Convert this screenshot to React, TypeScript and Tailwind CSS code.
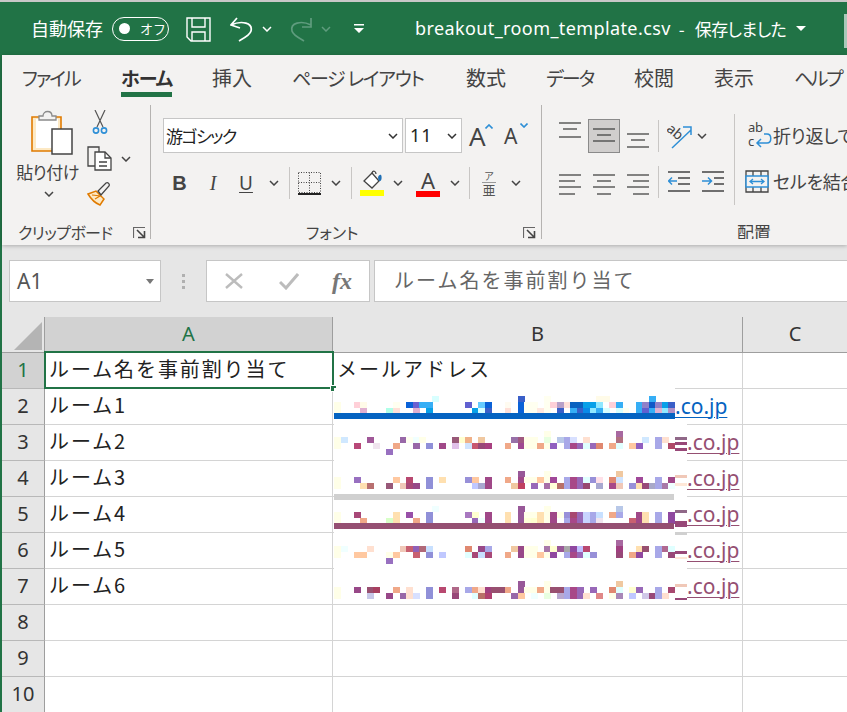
import React from "react";

const JP = "font-['Noto_Sans_CJK_JP','Noto_Sans',sans-serif]";

function Chev({ c = "#444", w = 10 }: { c?: string; w?: number }) {
  return (
    <svg width={w} height={6} viewBox="0 0 10 6" fill="none">
      <path d="M1 1l4 4 4-4" stroke={c} strokeWidth="1.5" />
    </svg>
  );
}

function Launcher() {
  return (
    <svg width="13" height="13" viewBox="0 0 13 13" fill="none">
      <path d="M.5 11V.5H12" stroke="#666" strokeWidth="1.2" />
      <path d="M4 3l7 7M5 10.5h6.5V4" stroke="#444" strokeWidth="1.6" />
    </svg>
  );
}

function Lines({ ys, insets = [] }: { ys: number[]; insets?: [number, number][] }) {
  return (
    <svg width="22" height="35" viewBox="0 0 22 35" fill="none">
      {ys.map((y, i) => {
        const [a, b] = insets[i] || [0, 22];
        return <path key={i} d={`M${a} ${y}H${b}`} stroke="#444" strokeWidth="1.3" />;
      })}
    </svg>
  );
}

function Sep({ h = "h-[32px]" }: { h?: string }) {
  return <div className={`w-px ${h} bg-[#c8c6c4] shrink-0`} />;
}

function TitleBar() {
  return (
    <div className="h-[53px] bg-[#217346] flex items-center text-white mt-[2px] pl-[31px] relative">
      <span className="text-[18px] w-[72px] whitespace-nowrap">自動保存</span>
      <div className="ml-[9px] w-[57px] h-[24px] rounded-full border border-white flex items-center pl-[6px] shrink-0">
        <div className="w-[11px] h-[11px] rounded-full bg-white" />
        <span className="ml-[10px] text-[13px] leading-none">オフ</span>
      </div>
      <svg className="ml-[17px] mt-[2px] shrink-0" width="25" height="25" viewBox="0 0 25 25" fill="none" stroke="#fff" strokeWidth="1.4">
        <path d="M1 1h23v23H5l-4-4z" />
        <path d="M6 1v9h13V1M6 24v-9h13v9" />
      </svg>
      <svg className="ml-[19px] mt-[2px] shrink-0" width="24" height="25" viewBox="0 0 24 25" fill="none" stroke="#fff" strokeWidth="1.7">
        <path d="M7 1L1 8l9 3M1 8C12 3 23 6 21 14c-1 4-7 7-12 10" />
      </svg>
      <div className="ml-[8px] w-[10px] flex"><Chev c="#fff" /></div>
      <svg className="ml-[17px] mt-[2px] shrink-0" width="24" height="25" viewBox="0 0 24 25" fill="none" stroke="#5f9c7e" strokeWidth="1.7">
        <path d="M22 1v9l-9 0M22 8C12 3 1 6 3 14c1 4 7 7 12 10" />
      </svg>
      <div className="ml-[8px] w-[10px] flex"><Chev c="#5f9c7e" /></div>
      <svg className="ml-[23px] shrink-0" width="10" height="9" viewBox="0 0 10 9" fill="#fff">
        <path d="M0 0h10v1.6H0zM0 4h10L5 9z" />
      </svg>
      <span className="ml-[51px] text-[18px] tracking-[0.4px] whitespace-nowrap font-['Noto_Sans','Noto_Sans_CJK_JP',sans-serif]">
        breakout_room_template.csv
      </span>
      <span className="ml-[8px] text-[17px] whitespace-nowrap">-</span>
      <span className="ml-[10px] text-[17px] whitespace-nowrap [font-feature-settings:'palt'] tracking-[-0.5px]">保存しました</span>
      <svg className="ml-[10px] shrink-0" width="10" height="5" viewBox="0 0 10 5" fill="#fff">
        <path d="M0 0h10L5 5z" />
      </svg>
      <div className="absolute right-0 top-[12px] w-[3px] h-[34px] bg-[#a9c9b9]" />
    </div>
  );
}

function Tabs() {
  return (
    <div className="h-[45px] flex gap-[41px] pl-[20px] text-[19px] text-[#444] [font-feature-settings:'palt'] leading-[46px] whitespace-nowrap">
      <span className="w-[58px] tracking-[-2px]">ファイル</span>
      <span className="w-[50px] font-bold text-[#333] relative tracking-[-1px]">
        ホーム
        <span className="absolute left-0 right-[-1px] top-[37px] h-[5px] bg-[#217346]" />
      </span>
      <span className="w-[39px] text-[20px]">挿入</span>
      <span className="w-[133px] tracking-[-1.3px]">ページ レイアウト</span>
      <span className="w-[39px] text-[20px]">数式</span>
      <span className="w-[47px] tracking-[-2px]">データ</span>
      <span className="w-[39px] text-[20px]">校閲</span>
      <span className="w-[39px] text-[20px]">表示</span>
      <span className="w-[47px] tracking-[-2.5px]">ヘルプ</span>
    </div>
  );
}

function ClipboardGroup() {
  return (
    <div className="w-[149px] shrink-0 h-[134px] border-r border-[#b5b3b1] flex flex-col relative">
      <div className="flex flex-1">
        <div className="w-[76px] ml-[15px] flex flex-col items-center shrink-0">
          <svg className="mt-[5px] ml-[-7px]" width="42" height="45" viewBox="0 0 42 45" fill="none">
            <path d="M1 7h29v34H1z" fill="#fde9c4" stroke="#e07b00" strokeWidth="1.6" />
            <path d="M5 9h22v29H5z" fill="#fff" />
            <path d="M8 10V6h4c0-6 9-6 9 0h4v4z" fill="#f3f2f1" stroke="#8a8a8a" strokeWidth="1.3" />
            <path d="M21 19h20v25H21z" fill="#fff" stroke="#444" strokeWidth="1.5" />
          </svg>
          <span className="text-[17px] leading-[20px] mt-[7px] text-[#444] [font-feature-settings:'palt'] whitespace-nowrap ml-[-15px] tracking-[-0.5px]">貼り付け</span>
          <div className="mt-[9px] ml-[-12px] flex"><Chev /></div>
        </div>
        <div className="flex flex-col mt-[5px] ml-[-6px]">
          <svg className="ml-[5px]" width="16" height="25" viewBox="0 0 16 25" fill="none">
            <path d="M3 0l8 17M13 0L5 17" stroke="#555" strokeWidth="1.2" />
            <circle cx="4" cy="20.5" r="2.6" stroke="#2e8fd6" strokeWidth="1.6" />
            <circle cx="12" cy="20.5" r="2.6" stroke="#2e8fd6" strokeWidth="1.6" />
          </svg>
          <div className="flex items-center mt-[11px]">
            <svg width="25" height="25" viewBox="0 0 25 25" fill="none" stroke="#444" strokeWidth="1.3">
              <path d="M8 20H1V1h11v5" />
              <path d="M8 6h10l6 6v12H8z" fill="#fff" />
              <path d="M18 6v6h6M12 16h8M12 20h8" />
            </svg>
            <div className="ml-[9px] flex"><Chev /></div>
          </div>
          <svg className="mt-[11px]" width="25" height="24" viewBox="0 0 25 24" fill="none">
            <path d="M1 12l8-3 8 8-4 6C8 21 4 17 1 12z" fill="#fde9c4" stroke="#e07b00" strokeWidth="1.5" />
            <path d="M5 13l9 1M8 17l5-3" stroke="#e07b00" strokeWidth="1.2" />
            <path d="M11 9l3 4 8-9c1-2-1-4-3-3z" fill="#f3f2f1" stroke="#444" strokeWidth="1.3" />
          </svg>
        </div>
      </div>
      <div className="h-[16px] flex items-center mb-[-1px] text-[16px] tracking-[-0.6px] text-[#444] [font-feature-settings:'palt'] pl-[16px] whitespace-nowrap">
        クリップボード
      </div>
      <div className="absolute right-[4px] bottom-[-1px] flex"><Launcher /></div>
    </div>
  );
}

function FontGroup() {
  return (
    <div className="w-[391px] shrink-0 h-[134px] border-r border-[#b5b3b1] flex flex-col relative pl-[12px] pt-[13px]">
      <div className="flex items-stretch h-[35px]">
        <div className="w-[240px] bg-white border border-[#c6c6c6] flex items-center pl-[2px] pr-[4px] justify-between text-[17px] tracking-[-1.5px] text-[#222] [font-feature-settings:'palt']">
          <span>游ゴシック</span>
          <Chev c="#333" />
        </div>
        <div className="ml-[2px] w-[57px] bg-white border border-[#c6c6c6] flex items-center pl-[4px] pr-[4px] justify-between text-[18px] text-[#222]">
          <span className="tracking-[1px] font-['Noto_Sans',sans-serif]">11</span>
          <Chev c="#333" />
        </div>
        <div className="ml-[7px] w-[24px] relative flex items-center font-['Noto_Sans',sans-serif] text-[26px] text-[#444] leading-none">
          A
          <svg className="absolute right-0 top-[6px]" width="8" height="5" viewBox="0 0 8 5" fill="none"><path d="M.5 4.5L4 1l3.5 3.5" stroke="#2e8fd6" strokeWidth="1.6" /></svg>
        </div>
        <div className="ml-[11px] w-[24px] relative flex items-center font-['Noto_Sans',sans-serif] text-[21px] text-[#444] leading-none pt-[2px]">
          A
          <svg className="absolute right-0 top-[5px]" width="8" height="5" viewBox="0 0 8 5" fill="none"><path d="M.5.5L4 4l3.5-3.5" stroke="#2e8fd6" strokeWidth="1.6" /></svg>
        </div>
      </div>
      <div className="flex items-center h-[32px] mt-[14px]">
        <span className="w-[33px] text-center text-[20px] font-bold text-[#444] font-['Liberation_Sans',sans-serif]">B</span>
        <span className="w-[34px] text-center text-[20px] italic text-[#444] font-['Liberation_Serif',serif]">I</span>
        <span className="w-[32px] text-center text-[19px] underline underline-offset-2 text-[#444] font-['Noto_Sans',sans-serif]">U</span>
        <div className="w-[23px] flex justify-center"><Chev /></div>
        <div className="ml-[4px]"><Sep /></div>
        <svg className="ml-[8px] shrink-0" width="23" height="23" viewBox="0 0 23 23" fill="none">
          <path d="M.5 .5h22v20H.5zM11.5 .5v20M.5 10.5h22" stroke="#444" strokeDasharray="1 1.5" />
          <path d="M0 22h23" stroke="#222" strokeWidth="2" />
        </svg>
        <div className="w-[30px] flex justify-center"><Chev /></div>
        <Sep />
        <svg className="ml-[8px] shrink-0" width="24" height="26" viewBox="0 0 24 26" fill="none">
          <path d="M4 11l8-8 7 8-7 7z" fill="#fff" stroke="#444" strokeWidth="1.3" />
          <path d="M12 3c1-3 4-2 4 1" stroke="#444" strokeWidth="1.3" />
          <path d="M19 11c3 1 3-5 2-6-2-1-3 2-3 3z" fill="#1f6fb5" />
          <path d="M0 20h24v6H0z" fill="#ffff00" />
        </svg>
        <div className="w-[28px] flex justify-center"><Chev /></div>
        <div className="ml-[4px] w-[24px] flex flex-col items-center">
          <span className="text-[22px] leading-[22px] text-[#444] font-['Noto_Sans',sans-serif]">A</span>
          <div className="w-[24px] h-[6px] bg-[#ff0000]" />
        </div>
        <div className="w-[29px] flex justify-center"><Chev /></div>
        <Sep />
        <div className="ml-[9px] w-[20px] flex flex-col items-center text-[#555] leading-none">
          <span className="text-[10px]">ア</span>
          <span className="text-[13px] border-t border-[#999] mt-[1px]">亜</span>
        </div>
        <div className="w-[34px] flex justify-center"><Chev /></div>
      </div>
      <div className="mt-auto h-[16px] mb-[-1px] flex items-center text-[16px] text-[#444] [font-feature-settings:'palt'] pl-[143px] whitespace-nowrap">
        フォント
      </div>
      <div className="absolute right-[5px] bottom-[-1px] flex"><Launcher /></div>
    </div>
  );
}

function AlignGroup() {
  return (
    <div className="flex-1 h-[134px] flex flex-col relative pl-[17px] overflow-hidden">
      <div className="flex mt-[9px] h-[91px]">
        <div className="flex flex-col shrink-0">
          <div className="flex items-center h-[35px] mt-[4px]">
            <Lines ys={[5, 11, 19]} insets={[[0, 22], [4, 18], [0, 22]]} />
            <div className="ml-[7px] w-[32px] h-[34px] bg-[#d0cecd] border border-[#8a8a8a] flex items-center justify-center">
              <Lines ys={[11, 17, 23]} insets={[[0, 22], [4, 18], [0, 22]]} />
            </div>
            <div className="ml-[7px]"><Lines ys={[16, 22, 29]} insets={[[0, 22], [4, 18], [0, 22]]} /></div>
            <div className="ml-[9px]"><Sep /></div>
            <svg className="ml-[8px] shrink-0" width="25" height="26" viewBox="0 0 25 26" fill="none">
              <path d="M5 25L24 7M16 4h8v8" stroke="#2e8fd6" strokeWidth="1.5" />
              <text x="0" y="12" fontSize="14" fill="#444" transform="rotate(40 6 8)" fontFamily="Noto Sans">ab</text>
            </svg>
            <div className="ml-[5px] flex"><Chev /></div>
          </div>
          <div className="flex items-center h-[35px] mt-[11px]">
            <Lines ys={[11, 17, 23, 30]} insets={[[0, 22], [0, 16], [0, 22], [0, 16]]} />
            <div className="ml-[12px]"><Lines ys={[11, 17, 23, 30]} insets={[[0, 22], [4, 18], [0, 22], [4, 18]]} /></div>
            <div className="ml-[12px]"><Lines ys={[11, 17, 23, 30]} insets={[[0, 22], [6, 22], [0, 22], [6, 22]]} /></div>
            <div className="ml-[9px]"><Sep /></div>
            <svg className="ml-[9px] shrink-0" width="22" height="21" viewBox="0 0 22 21" fill="none">
              <path d="M0 1h22M10 7h12M10 13h12M0 20h22" stroke="#444" strokeWidth="1.3" />
              <path d="M9 10H1M4 6.5L.5 10 4 13.5" stroke="#2e8fd6" strokeWidth="1.5" />
            </svg>
            <svg className="ml-[12px] shrink-0" width="22" height="21" viewBox="0 0 22 21" fill="none">
              <path d="M0 1h22M12 7h10M12 13h10M0 20h22" stroke="#444" strokeWidth="1.3" />
              <path d="M0 10h9M6 6.5L9.5 10 6 13.5" stroke="#2e8fd6" strokeWidth="1.5" />
            </svg>
          </div>
        </div>
        <div className="ml-[10px]"><Sep h="h-[91px]" /></div>
        <div className="flex flex-col ml-[11px] shrink-0 whitespace-nowrap text-[18px] tracking-[-0.3px] text-[#444] [font-feature-settings:'palt']">
          <div className="flex items-center h-[35px] mt-[4px] ml-[2px]">
            <svg width="24" height="28" viewBox="0 0 24 28" fill="none">
              <text x="0" y="10" fontSize="13" fill="#444" fontFamily="Noto Sans">ab</text>
              <text x="0" y="24" fontSize="13" fill="#444" fontFamily="Noto Sans">c</text>
              <path d="M16 12h3c5 0 5 9 0 9H10M13 17l-4 4 4 4" stroke="#2e8fd6" strokeWidth="1.5" />
            </svg>
            <span className="ml-[1px]">折り返して</span>
          </div>
          <div className="flex items-center h-[35px] mt-[11px] ml-[-1px]">
            <svg width="24" height="23" viewBox="0 0 24 23" fill="none">
              <path d="M1 1h22v21H1zM8 1v21M16 1v21" stroke="#444" strokeWidth="1.3" />
              <path d="M1 6h22v11H1z" fill="#f3f2f1" stroke="#2e8fd6" strokeWidth="1.5" />
              <path d="M5 11.5h14M8 9l-3 2.5L8 14M16 9l3 2.5L16 14" stroke="#2e8fd6" strokeWidth="1.3" />
            </svg>
            <span className="ml-[4px]">セルを結合</span>
          </div>
        </div>
      </div>
      <div className="mt-auto h-[16px] mb-[-1px] text-[17px] text-[#444] leading-[16px] pl-[178px]">配置</div>
    </div>
  );
}

function FormulaBar() {
  return (
    <div className="h-[72px] bg-[#e6e6e6] flex pt-[15px] pl-[7px] items-start">
      <div className="w-[152px] h-[42px] bg-white border border-[#c6c6c6] flex items-center justify-between pl-[7px] pr-[6px] text-[21px] text-[#555] font-['Noto_Sans',sans-serif]">
        <span className="pt-[2px]">A1</span>
        <svg width="8" height="5" viewBox="0 0 8 5" fill="#777"><path d="M0 0h8L4 5z" /></svg>
      </div>
      <div className="w-[45px] h-[42px] flex flex-col items-center justify-center gap-[3px] pt-[1px]">
        <div className="w-[3px] h-[3px] bg-[#b0b0b0]" />
        <div className="w-[3px] h-[3px] bg-[#b0b0b0]" />
        <div className="w-[3px] h-[3px] bg-[#b0b0b0]" />
      </div>
      <div className="w-[164px] h-[42px] bg-white border border-[#c6c6c6] flex items-center pl-[18px] shrink-0">
        <svg width="18" height="18" viewBox="0 0 18 18" fill="none" stroke="#bcbcbc" strokeWidth="2.4"><path d="M1 2l16 14M17 2L1 16" /></svg>
        <svg className="ml-[36px]" width="20" height="18" viewBox="0 0 20 18" fill="none" stroke="#bcbcbc" strokeWidth="3"><path d="M1 10l6 6L19 2" /></svg>
        <span className="ml-[33px] text-[24px] italic font-bold text-[#777] font-['Liberation_Serif',serif] leading-none">fx</span>
      </div>
      <div className="ml-[4px] flex-1 h-[42px] bg-white border-y border-l border-[#c6c6c6] flex items-center pl-[19px] pb-[3px] text-[20px] tracking-[2px] text-[#666] whitespace-nowrap overflow-hidden">
        ルーム名を事前割り当て
      </div>
    </div>
  );
}

type B = [number, number, string];
const CW = 341 / 52;

const r2: B[] = [[15,0,"#d8ffff"],[28,0,"#3a5fc8"],[48,0,"#36aef5"],[32,0,"#fffff0"],[40,0,"#fffbe8"],[41,0,"#fffbe8"],
[0,1,"#ffffe8"],[3,1,"#ffd0d8"],[4,1,"#fffbe8"],[9,1,"#fffff0"],[11,1,"#0a62d8"],[12,1,"#6a60d0"],[13,1,"#36aef5"],[14,1,"#36aef5"],[20,1,"#6060d0"],[22,1,"#66ccff"],[23,1,"#0a62d8"],[26,1,"#fffbf0"],[28,1,"#0a62d8"],[29,1,"#fffff0"],[30,1,"#fffff0"],[32,1,"#fffff0"],[33,1,"#ffd0d8"],[34,1,"#b8a0c8"],[35,1,"#ffe0d8"],[36,1,"#0a62c0"],[37,1,"#0a62c0"],[38,1,"#08a0e8"],[39,1,"#08a0e8"],[40,1,"#90e8ff"],[42,1,"#ffd0d8"],[43,1,"#36aef5"],[46,1,"#36aef5"],[47,1,"#9080c8"],[48,1,"#1058c8"],[49,1,"#9080c8"],[50,1,"#08a0e8"],[51,1,"#3a5fc8"],
[0,2,"#ffffe8"],[4,2,"#e0b0d0"],[8,2,"#b0ffe8"],[9,2,"#ffe0d8"],[12,2,"#e0b0d0"],[14,2,"#08a0e8"],[21,2,"#08a0e8"],[22,2,"#d8ffff"],[23,2,"#3a5fc8"],[26,2,"#ffe0d8"],[28,2,"#0a62d8"],[29,2,"#fffff0"],[30,2,"#fffff0"],[31,2,"#ffe8e0"],[32,2,"#fffff0"],[34,2,"#3a5fc8"],[36,2,"#36aef5"],[37,2,"#3a5fc8"],[38,2,"#0a8ae8"],[39,2,"#90e8ff"],[40,2,"#36aef5"],[41,2,"#d8ffff"],[43,2,"#d8ffff"],[44,2,"#fffff0"],[46,2,"#36aef5"],[47,2,"#6060d0"],[48,2,"#36aef5"],[49,2,"#e0b0d0"],[50,2,"#90e8ff"],[51,2,"#b090c8"]];

const r3: B[] = [[32,0,"#ffffe8"],[43,0,"#a868a0"],
[0,1,"#ffffe8"],[1,1,"#d0e8ff"],[5,1,"#a05898"],[10,1,"#9868a8"],[11,1,"#fffff0"],[12,1,"#f0ffff"],[13,1,"#ffffe8"],[18,1,"#985878"],[19,1,"#ffffd0"],[20,1,"#f0b088"],[22,1,"#f0c8a0"],[27,1,"#9870a8"],[28,1,"#a05880"],[29,1,"#ffffe8"],[30,1,"#ffffe8"],[32,1,"#e8ffe0"],[34,1,"#b8c8e8"],[35,1,"#a8a8e8"],[36,1,"#d8e0ff"],[38,1,"#ffe0d0"],[43,1,"#b07080"],[47,1,"#d0e8ff"],[49,1,"#a8a8e8"],[50,1,"#ffe0d0"],
[0,2,"#ffffe8"],[3,2,"#b84878"],[6,2,"#f0e4ee"],[9,2,"#f0a888"],[12,2,"#9868a8"],[14,2,"#9090d8"],[16,2,"#a04888"],[18,2,"#e0c0e8"],[20,2,"#d0e4ff"],[21,2,"#c85870"],[22,2,"#984878"],[23,2,"#a84080"],[26,2,"#f0a888"],[28,2,"#a04890"],[29,2,"#ffffe8"],[30,2,"#ffffe8"],[31,2,"#f0a888"],[32,2,"#ffffe8"],[33,2,"#9060c0"],[35,2,"#a8a8e8"],[36,2,"#a84888"],[37,2,"#9868b8"],[38,2,"#e0ffff"],[39,2,"#9868b8"],[40,2,"#e08870"],[42,2,"#f0a888"],[43,2,"#e0ffff"],[45,2,"#ffc8a0"],[46,2,"#9060c0"],[49,2,"#a8a8e8"],[51,2,"#b04868"],
[8,3,"#9870c0"]];

const r4: B[] = [[28,0,"#985898"],[32,0,"#ffffe8"],[43,0,"#f0c8a0"],
[0,1,"#ffffe8"],[3,1,"#9870c0"],[9,1,"#ffc8a0"],[11,1,"#b84870"],[14,1,"#9090d8"],[16,1,"#ffe0b0"],[20,1,"#9890d8"],[21,1,"#ffc8a0"],[23,1,"#a04888"],[26,1,"#f0a888"],[28,1,"#a04888"],[29,1,"#ffffe8"],[30,1,"#ffffe8"],[31,1,"#ffc8a0"],[32,1,"#ffffe8"],[33,1,"#a04898"],[35,1,"#a8a8e8"],[36,1,"#a84888"],[37,1,"#9868b8"],[38,1,"#e0ffff"],[39,1,"#9890d8"],[40,1,"#ffe0e8"],[42,1,"#e08870"],[43,1,"#d0e4ff"],[46,1,"#a04898"],[49,1,"#a8a8e8"],[51,1,"#a04888"],
[0,2,"#ffffe8"],[4,2,"#ffe0b0"],[5,2,"#b87070"],[8,2,"#985878"],[10,2,"#f0c8b8"],[11,2,"#a84878"],[12,2,"#984888"],[14,2,"#9090d8"],[21,2,"#c0c8ff"],[22,2,"#a8a8d0"],[23,2,"#a04888"],[27,2,"#f0c8a0"],[28,2,"#c04060"],[30,2,"#9868b8"],[32,2,"#a870a8"],[33,2,"#ffffd8"],[34,2,"#b87068"],[35,2,"#a8a8e8"],[36,2,"#a84888"],[37,2,"#9868b8"],[38,2,"#984870"],[40,2,"#a8a8d0"],[42,2,"#a84888"],[43,2,"#f0c8b8"],[45,2,"#9890d8"],[46,2,"#ffe0b0"],[47,2,"#984878"],[48,2,"#a8a8c8"],[49,2,"#a8a8e8"],[50,2,"#a878a8"],[51,2,"#f0ffff"]];

const r5: B[] = [[15,0,"#f0ffff"],[28,0,"#985898"],[32,0,"#ffffe8"],[43,0,"#b8c8e8"],
[0,1,"#ffffe8"],[3,1,"#a84878"],[9,1,"#ffe0b0"],[11,1,"#9850a8"],[14,1,"#9090d8"],[20,1,"#a878c0"],[21,1,"#ffffd0"],[23,1,"#a04888"],[26,1,"#ffe0b0"],[28,1,"#985898"],[29,1,"#ffffe8"],[30,1,"#ffffe8"],[31,1,"#ffe0b0"],[32,1,"#ffffe8"],[33,1,"#a04888"],[34,1,"#ffffe8"],[35,1,"#9890d8"],[36,1,"#a84870"],[37,1,"#9868b8"],[38,1,"#c8d4ff"],[39,1,"#a8a8e8"],[40,1,"#c8e0ff"],[42,1,"#f0a888"],[43,1,"#a8a8e8"],[46,1,"#a04888"],[47,1,"#ffe0b0"],[49,1,"#a8a8e8"],[51,1,"#9048a0"],
[0,2,"#ffffe8"],[4,2,"#f0a888"],[8,2,"#d8ffc8"],[9,2,"#ffe0b0"],[12,2,"#f0a888"],[14,2,"#9090d8"],[21,2,"#9868b8"],[22,2,"#f0ffff"],[23,2,"#a04888"],[26,2,"#ffe0b0"],[28,2,"#985898"],[29,2,"#ffffd8"],[30,2,"#ffffd0"],[31,2,"#ffe0b0"],[32,2,"#ffffe8"],[33,2,"#a04888"],[35,2,"#a8a8e8"],[36,2,"#a84888"],[37,2,"#9868b8"],[38,2,"#c8d4ff"],[39,2,"#a8a8e8"],[40,2,"#f0e4ee"],[45,2,"#c86070"],[46,2,"#a04888"],[47,2,"#ffe0b0"],[49,2,"#a8a8e8"],[51,2,"#9048a0"]];

const r6: B[] = [[32,0,"#ffffe8"],[43,0,"#a868a0"],
[0,1,"#ffffe8"],[1,1,"#f0ffff"],[5,1,"#ffe0d0"],[10,1,"#f0c8b8"],[11,1,"#c86070"],[12,1,"#9060b8"],[13,1,"#b06878"],[14,1,"#c8e0ff"],[20,1,"#e08870"],[22,1,"#984888"],[23,1,"#a8a8e8"],[27,1,"#f0c8a0"],[28,1,"#984888"],[29,1,"#ffffe8"],[30,1,"#ffffe8"],[32,1,"#a878a8"],[33,1,"#ffffd0"],[34,1,"#985898"],[35,1,"#a8a8a8"],[36,1,"#9048a0"],[37,1,"#c0c0ff"],[38,1,"#b84870"],[43,1,"#a04080"],[46,1,"#ffe0b0"],[47,1,"#985070"],[49,1,"#a8a8e8"],[50,1,"#b06890"],[51,1,"#e0ffff"],
[0,2,"#ffffe8"],[3,2,"#ffc8a0"],[4,2,"#ffc8a0"],[8,2,"#ffffe8"],[9,2,"#ffc8a0"],[12,2,"#c86070"],[14,2,"#9090d8"],[16,2,"#c0c8ff"],[20,2,"#e0ffff"],[21,2,"#a84878"],[22,2,"#c8e0ff"],[23,2,"#a84878"],[26,2,"#f0a888"],[28,2,"#984888"],[29,2,"#ffffe8"],[30,2,"#ffffe8"],[31,2,"#ffc8a0"],[32,2,"#ffffe8"],[33,2,"#9048a0"],[35,2,"#a8a8e8"],[36,2,"#a84888"],[37,2,"#9868b8"],[38,2,"#e0ffff"],[39,2,"#9890d8"],[43,2,"#984878"],[45,2,"#f0a888"],[46,2,"#9048a0"],[49,2,"#a8a8e8"],[51,2,"#984878"],
[8,3,"#9870c0"]];

const r7: B[] = [[28,0,"#985898"],[32,0,"#ffffe8"],[43,0,"#f0c8a0"],
[0,1,"#ffffe8"],[3,1,"#984888"],[5,1,"#985070"],[6,1,"#a84060"],[9,1,"#f0a888"],[11,1,"#ffe0d0"],[14,1,"#9090d8"],[16,1,"#b84870"],[18,1,"#b06888"],[20,1,"#a8a8e8"],[21,1,"#f0a888"],[22,1,"#ffe0d0"],[23,1,"#a04080"],[24,1,"#985070"],[25,1,"#985070"],[26,1,"#f0a888"],[28,1,"#985898"],[29,1,"#ffffe8"],[30,1,"#ffffe8"],[31,1,"#f0a888"],[32,1,"#ffffe8"],[33,1,"#985070"],[34,1,"#985070"],[35,1,"#a8a8e8"],[36,1,"#a84888"],[37,1,"#9868b8"],[39,1,"#9868b8"],[42,1,"#e08870"],[43,1,"#e0ffff"],[45,1,"#ffffd0"],[46,1,"#9868b8"],[49,1,"#a8a8e8"],[51,1,"#a84870"],
[0,2,"#ffffe8"],[5,2,"#c8c8e8"],[8,2,"#984888"],[10,2,"#9868a8"],[11,2,"#ffe0d0"],[12,2,"#d8e0ff"],[14,2,"#9090d8"],[18,2,"#984878"],[21,2,"#e0ffff"],[22,2,"#b87068"],[23,2,"#b04070"],[27,2,"#9868a8"],[28,2,"#ffc8a0"],[30,2,"#f0ffff"],[32,2,"#e8ffe0"],[34,2,"#b8a8d0"],[35,2,"#a8a8e8"],[36,2,"#a84888"],[37,2,"#9868b8"],[38,2,"#ffe0d0"],[40,2,"#e08888"],[42,2,"#ffffe8"],[43,2,"#a888b8"],[45,2,"#c0c8ff"],[47,2,"#d0c8e8"],[48,2,"#984878"],[49,2,"#a8a8e8"],[50,2,"#ffe0d0"]];

const mosaic: { top: number; data: B[] }[] = [
  { top: 8, data: r2 },
  { top: 43, data: r3 },
  { top: 83, data: r4 },
  { top: 118, data: r5 },
  { top: 152, data: r6 },
  { top: 193, data: r7 },
];

const dashes: [number, number, string][] = [
  [49, 3, "#906888"], [54, 3, "#984878"], [60, 3, "#984878"],
  [87, 3, "#f0c8b8"], [95, 3, "#ffe8d8"],
  [122, 3, "#906888"], [133, 6, "#984878"], [144, 3, "#d0d0d0"],
  [163, 3, "#984878"], [169, 2, "#ffe8d8"],
  [196, 3, "#f0c8b8"], [210, 2, "#984878"],
];

function Mosaic() {
  return (
    <svg className="absolute left-[1px] top-0 pointer-events-none" width="354" height="216" viewBox="0 0 354 216" shapeRendering="crispEdges">
      <path d="M0 0h341v35h12v180H0z" fill="#fff" />
      {mosaic.map((m, i) =>
        m.data.map(([c, l, col], j) => (
          <rect key={`${i}-${j}`} x={c * CW} y={m.top + l * 6} width={CW + 0.4} height={6.2} fill={col} />
        ))
      )}
      <rect x="0" y="25" width="341" height="6" fill="#0563c1" />
      <rect x="0" y="106" width="340" height="6" fill="#d0d0d0" />
      <rect x="0" y="135" width="340" height="6" fill="#954f72" />
      {dashes.map(([y, h, c], i) => (
        <rect key={i} x="341" y={y} width="12" height={h} fill={c} />
      ))}
    </svg>
  );
}

const rowNames = ["ルーム名を事前割り当て", "ルーム1", "ルーム2", "ルーム3", "ルーム4", "ルーム5", "ルーム6", "", "", ""];

function Grid() {
  return (
    <div className="flex flex-col">
      <div className="flex h-[36px]">
        <div className="w-[43px] bg-[#e6e6e6] border-r border-b border-[#9e9e9e] flex items-end justify-end pr-[2px] pb-[2px] shrink-0">
          <svg width="28" height="28" viewBox="0 0 28 28"><path d="M28 0v28H0z" fill="#b4b4b4" /></svg>
        </div>
        <div className="w-[288px] bg-[#d2d2d2] border-r border-b border-[#9e9e9e] flex items-center justify-center pb-[2px] text-[20px] text-[#217346] font-['Noto_Sans',sans-serif] shrink-0">A</div>
        <div className="w-[410px] bg-[#e6e6e6] border-r border-b border-[#9e9e9e] flex items-center justify-center pb-[2px] text-[20px] text-[#333] font-['Noto_Sans',sans-serif] shrink-0">B</div>
        <div className="flex-1 bg-[#e6e6e6] border-b border-[#9e9e9e] flex items-center justify-center pb-[2px] text-[20px] text-[#333] font-['Noto_Sans',sans-serif]">C</div>
      </div>
      {rowNames.map((name, i) => (
        <div key={i} className="flex h-[36px] shrink-0">
          <div className={`w-[43px] shrink-0 border-r border-b border-r-[#9e9e9e] border-b-[#b8b8b8] flex items-center justify-center pb-[2px] text-[20px] font-['Noto_Sans',sans-serif] ${i === 0 ? "bg-[#d2d2d2] text-[#217346]" : "bg-[#e6e6e6] text-[#333]"}`}>
            {i + 1}
          </div>
          <div className="w-[288px] shrink-0 bg-white border-r border-b border-[#d4d4d4] flex items-center pl-[4px] pb-[3px] text-[20px] tracking-[1.9px] text-[#222] whitespace-nowrap">
            {name}
          </div>
          <div className="w-[410px] shrink-0 bg-white border-r border-b border-[#d4d4d4] flex items-center pl-[4px] pb-[3px] text-[20px] tracking-[2px] text-[#222] whitespace-nowrap relative">
            {i === 0 ? "メールアドレス" : null}
          </div>
          <div className="flex-1 bg-white border-b border-[#d4d4d4]" />
        </div>
      ))}
    </div>
  );
}

const links = [
  { pl: "pl-[342px]", c: "text-[#0563c1]" },
  { pl: "pl-[354px]", c: "text-[#954f72]" },
  { pl: "pl-[354px]", c: "text-[#954f72]" },
  { pl: "pl-[354px]", c: "text-[#954f72]" },
  { pl: "pl-[354px]", c: "text-[#954f72]" },
  { pl: "pl-[354px]", c: "text-[#954f72]" },
];

export default function App() {
  return (
    <div className={`w-[847px] h-[712px] overflow-hidden bg-[#c8c8c8] relative ${JP}`}>
      <div className="flex flex-col">
        <TitleBar />
        <div className="border-l-2 border-[#217346] flex flex-col">
          <div className="bg-[#f3f2f1] h-[190px] flex flex-col shadow-[0_1px_4px_rgba(0,0,0,0.25)] relative z-10">
            <Tabs />
            <div className="flex mt-[5px]">
              <ClipboardGroup />
              <FontGroup />
              <AlignGroup />
            </div>
          </div>
          <FormulaBar />
          <div className="relative">
            <Grid />
            <div className="absolute left-[42px] top-[34px] w-[290px] h-[38px] border-2 border-[#217346] pointer-events-none" />
            <div className="absolute left-[328px] top-[68px] w-[7px] h-[7px] bg-[#217346] border border-white" />
            <div className="absolute left-[331px] top-[71px]">
              <Mosaic />
              <div className="flex flex-col relative">
                {links.map((l, i) => (
                  <div key={i} className={`h-[36px] ${l.pl} flex items-center text-[21px] leading-none whitespace-nowrap ${l.c} font-['Noto_Sans',sans-serif]`}>
                    <span className="underline decoration-1 underline-offset-[3px]">.co.jp</span>
                  </div>
                ))}
              </div>
            </div>
          </div>
        </div>
      </div>
    </div>
  );
}
